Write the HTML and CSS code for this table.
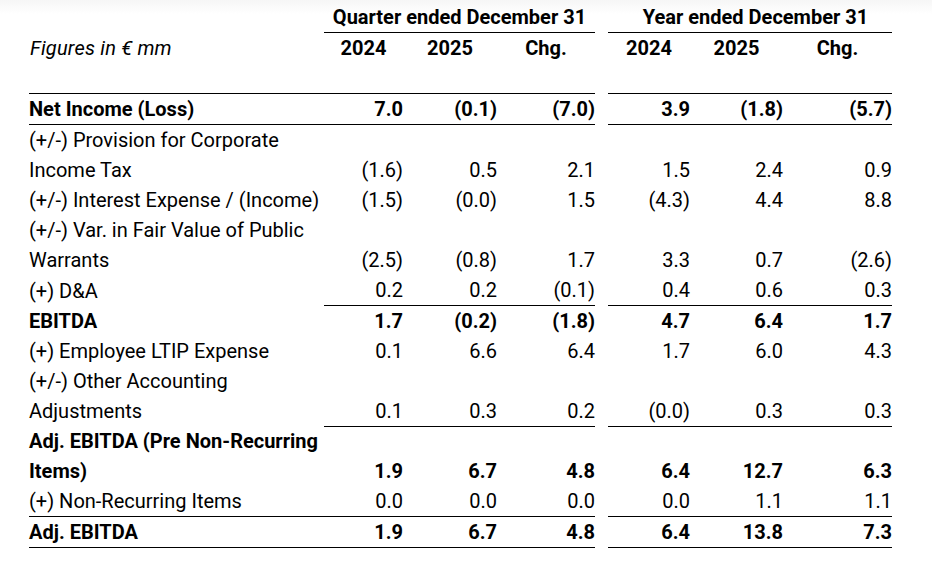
FILE: index.html
```html
<!DOCTYPE html>
<html lang="en">
<head>
<meta charset="utf-8">
<title>EBITDA reconciliation</title>
<link rel="stylesheet" href="styles.css">
</head>
<body>
<table class="fin">
  <colgroup>
    <col class="c-label">
    <col class="c-q1"><col class="c-q2"><col class="c-q3">
    <col class="c-sp">
    <col class="c-y1"><col class="c-y2"><col class="c-y3">
  </colgroup>
  <thead>
    <tr class="h1">
      <th></th>
      <th colspan="3" class="grp">Quarter ended December 31</th>
      <th class="sp"></th>
      <th colspan="3" class="grp grp-year">Year ended December 31</th>
    </tr>
    <tr class="h2">
      <th class="units">Figures in € mm</th>
      <th>2024</th><th>2025</th><th>Chg.</th>
      <th class="sp"></th>
      <th>2024</th><th>2025</th><th>Chg.</th>
    </tr>
  </thead>
  <tbody>
    <tr class="bold top-all bot-all">
      <td class="lbl">Net Income (Loss)</td>
      <td>7.0</td><td>(0.1)</td><td>(7.0)</td><td class="sp"></td>
      <td>3.9</td><td>(1.8)</td><td>(5.7)</td>
    </tr>
    <tr>
      <td class="lbl">(+/-) Provision for Corporate<br>Income Tax</td>
      <td>(1.6)</td><td>0.5</td><td>2.1</td><td class="sp"></td>
      <td>1.5</td><td>2.4</td><td>0.9</td>
    </tr>
    <tr>
      <td class="lbl">(+/-) Interest Expense / (Income)</td>
      <td>(1.5)</td><td>(0.0)</td><td>1.5</td><td class="sp"></td>
      <td>(4.3)</td><td>4.4</td><td>8.8</td>
    </tr>
    <tr>
      <td class="lbl">(+/-) Var. in Fair Value of Public<br>Warrants</td>
      <td>(2.5)</td><td>(0.8)</td><td>1.7</td><td class="sp"></td>
      <td>3.3</td><td>0.7</td><td>(2.6)</td>
    </tr>
    <tr>
      <td class="lbl">(+) D&amp;A</td>
      <td>0.2</td><td>0.2</td><td>(0.1)</td><td class="sp"></td>
      <td>0.4</td><td>0.6</td><td>0.3</td>
    </tr>
    <tr class="bold top-num">
      <td class="lbl">EBITDA</td>
      <td>1.7</td><td>(0.2)</td><td>(1.8)</td><td class="sp"></td>
      <td>4.7</td><td>6.4</td><td>1.7</td>
    </tr>
    <tr>
      <td class="lbl">(+) Employee LTIP Expense</td>
      <td>0.1</td><td>6.6</td><td>6.4</td><td class="sp"></td>
      <td>1.7</td><td>6.0</td><td>4.3</td>
    </tr>
    <tr>
      <td class="lbl">(+/-) Other Accounting<br>Adjustments</td>
      <td>0.1</td><td>0.3</td><td>0.2</td><td class="sp"></td>
      <td>(0.0)</td><td>0.3</td><td>0.3</td>
    </tr>
    <tr class="bold top-num">
      <td class="lbl">Adj. EBITDA (Pre Non-Recurring<br>Items)</td>
      <td>1.9</td><td>6.7</td><td>4.8</td><td class="sp"></td>
      <td>6.4</td><td>12.7</td><td>6.3</td>
    </tr>
    <tr>
      <td class="lbl">(+) Non-Recurring Items</td>
      <td>0.0</td><td>0.0</td><td>0.0</td><td class="sp"></td>
      <td>0.0</td><td>1.1</td><td>1.1</td>
    </tr>
    <tr class="bold top-all bot-all">
      <td class="lbl">Adj. EBITDA</td>
      <td>1.9</td><td>6.7</td><td>4.8</td><td class="sp"></td>
      <td>6.4</td><td>13.8</td><td>7.3</td>
    </tr>
  </tbody>
</table>
</body>
</html>
```

FILE: styles.css
```css
html, body {
  margin: 0;
  padding: 0;
}

body {
  width: 932px;
  height: 563px;
  background: linear-gradient(#f6f6f6 0px, #ffffff 14px);
  font-family: Roboto, "Liberation Sans", Arial, sans-serif;
  font-size: 20px;
  color: #000;
}

.fin {
  border-collapse: collapse;
  table-layout: fixed;
  margin: 2px 0 0 29px;
  width: 863px;
}

.c-label { width: 295px; }
.c-q1 { width: 79px; }
.c-q2 { width: 94px; }
.c-q3 { width: 98px; }
.c-sp { width: 13px; }
.c-y1 { width: 82px; }
.c-y2 { width: 93px; }
.c-y3 { width: 109px; }

.fin th,
.fin td {
  padding: 0;
  line-height: 30px;
  white-space: nowrap;
}

.fin th {
  font-weight: 700;
  text-align: center;
}

.h1 .grp {
  border-bottom: 1px solid #000;
}

.h1 .grp-year {
  padding-left: 11px;
}

.h2 th {
  height: 60px;
  vertical-align: top;
}

.h2 .units {
  text-align: left;
  font-weight: 400;
  font-style: italic;
  padding-left: 1px;
  letter-spacing: 0.2px;
}

.fin td {
  text-align: right;
  vertical-align: bottom;
}

.fin td.lbl {
  text-align: left;
}

.bold td {
  font-weight: 700;
}

.top-all td {
  border-top: 1px solid #000;
}

.bot-all td {
  border-bottom: 1px solid #000;
}

.top-num td {
  border-top: 1px solid #000;
}

.top-num td.lbl,
.fin td.sp,
.fin th.sp {
  border-top: none;
  border-bottom: none;
}
```
